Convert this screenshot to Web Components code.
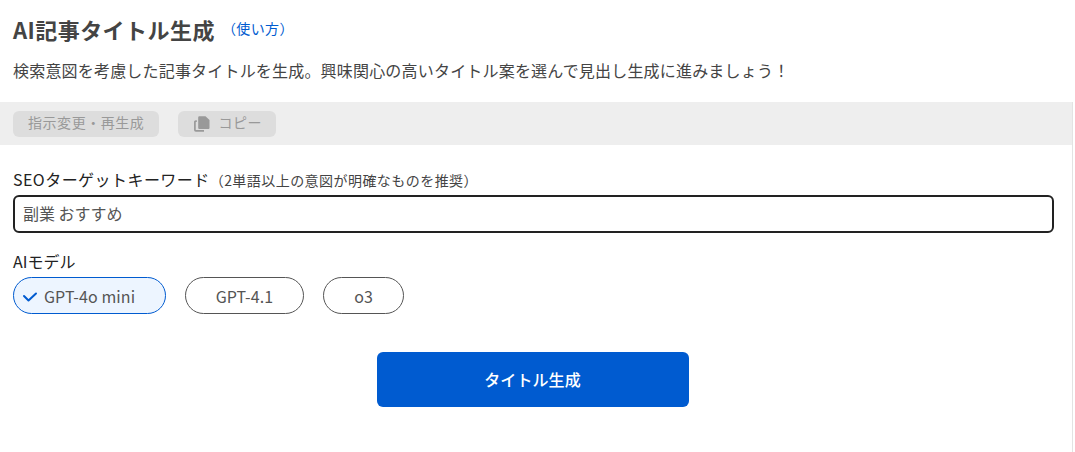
<!DOCTYPE html>
<html lang="ja">
<head>
<meta charset="utf-8">
<title>AI記事タイトル生成</title>
<style>
  html, body { margin: 0; background: #fff; }
  body { font-family: "Noto Sans CJK JP", sans-serif; color: #333; }
</style>
</head>
<body>
<title-page>
  <page-header slot="header" link="（使い方）" heading="AI記事タイトル生成">検索意図を考慮した記事タイトルを生成。興味関心の高いタイトル案を選んで見出し生成に進みましょう！</page-header>
  <action-bar slot="bar">
    <bar-button>指示変更・再生成</bar-button>
    <bar-button icon="copy">コピー</bar-button>
  </action-bar>
  <keyword-field label="SEOターゲットキーワード" hint="（2単語以上の意図が明確なものを推奨）" value="副業 おすすめ"></keyword-field>
  <model-picker label="AIモデル">
    <model-chip selected>GPT-4o mini</model-chip>
    <model-chip>GPT-4.1</model-chip>
    <model-chip>o3</model-chip>
  </model-picker>
  <submit-button>タイトル生成</submit-button>
</title-page>

<script>
class TitlePage extends HTMLElement {
  constructor() {
    super();
    this.attachShadow({mode: 'open'}).innerHTML = `
      <style>
        :host {
          display: block;
          width: 1073px;
          height: 452px;
        }
        .body {
          height: 350px;
          border-right: 1px solid #e3e3e3;
        }
        .form {
          padding: 24px 18px 0 13px;
          display: flex;
          flex-direction: column;
        }
      </style>
      <slot name="header"></slot>
      <div class="body">
        <slot name="bar"></slot>
        <div class="form"><slot></slot></div>
      </div>`;
  }
}

class PageHeader extends HTMLElement {
  connectedCallback() {
    const root = this.attachShadow({mode: 'open'});
    root.innerHTML = `
      <style>
        :host { display: block; height: 102px; padding: 0 13px; box-sizing: border-box; }
        .top { display: flex; align-items: center; height: 30px; padding-top: 14px; }
        h1 { margin: 0; font-size: 22px; line-height: 30px; font-weight: 700; color: #444; letter-spacing: 0.45px; }
        a { margin: 0 0 2px 7px; font-size: 14px; color: #005bd0; text-decoration: none; letter-spacing: 0.4px; }
        p { margin: 14px 0 0; font-size: 16px; line-height: 24px; color: #444; letter-spacing: 0.19px; }
      </style>
      <div class="top"><h1></h1><a href="#"></a></div>
      <p><slot></slot></p>`;
    root.querySelector('h1').textContent = this.getAttribute('heading');
    root.querySelector('a').textContent = this.getAttribute('link');
  }
}

class ActionBar extends HTMLElement {
  constructor() {
    super();
    this.attachShadow({mode: 'open'}).innerHTML = `
      <style>
        :host {
          display: flex;
          align-items: center;
          gap: 19px;
          height: 43px;
          padding: 0 13px;
          background: #eee;
        }
      </style>
      <slot></slot>`;
  }
}

class BarButton extends HTMLElement {
  connectedCallback() {
    const icon = this.getAttribute('icon') == 'copy' ? `
      <svg width="16" height="16" viewBox="0 0 16 16">
        <path fill="#999" d="M5.500.3H11.500L15.500 4V11.700C15.500 12.500 15 13 14.200 13H5.500C4.700 13 4.200 12.500 4.200 11.700V1.600C4.200.8 4.700.3 5.500.3z"/>
        <path fill="none" stroke="#999" stroke-width="1.700" d="M2.800 5.200H1.800C1.200 5.200.9 5.500.9 6.100V14C.9 14.600 1.200 14.900 1.800 14.900H10"/>
      </svg>` : '';
    this.attachShadow({mode: 'open'}).innerHTML = `
      <style>
        :host {
          display: inline-flex;
          align-items: center;
          gap: 8px;
          height: 26px;
          padding: 0 15px;
          border-radius: 6px;
          background: #ddd;
          color: #999;
          font-size: 14px;
          letter-spacing: 0.55px;
        }
        :host([icon]) { padding: 0 14px 0 16px; }
        svg { display: block; }
        span { margin-bottom: 3px; }
      </style>
      ${icon}<span><slot></slot></span>`;
  }
}

class KeywordField extends HTMLElement {
  connectedCallback() {
    const root = this.attachShadow({mode: 'open'});
    root.innerHTML = `
      <style>
        :host { display: block; }
        label { display: block; font-size: 16px; line-height: 20px; color: #222; letter-spacing: 0.45px; }
        small { font-size: 14px; color: #444; letter-spacing: 0.45px; }
        input {
          display: block;
          box-sizing: border-box;
          width: 100%;
          height: 38px;
          margin-top: 5px;
          padding: 0 8px 2px;
          border: 2px solid #222;
          border-radius: 6px;
          font: inherit;
          font-size: 16px;
          color: #555;
          outline: none;
        }
      </style>
      <label><span></span><small></small></label>
      <input type="text">`;
    root.querySelector('span').textContent = this.getAttribute('label');
    root.querySelector('small').textContent = this.getAttribute('hint');
    root.querySelector('input').value = this.getAttribute('value');
  }
}

class ModelPicker extends HTMLElement {
  connectedCallback() {
    const root = this.attachShadow({mode: 'open'});
    root.innerHTML = `
      <style>
        :host { display: block; margin-top: 18px; }
        .label { font-size: 16px; line-height: 20px; color: #222; }
        .chips { display: flex; gap: 19px; margin-top: 6px; }
      </style>
      <div class="label"></div>
      <div class="chips"><slot></slot></div>`;
    root.querySelector('.label').textContent = this.getAttribute('label');
  }
}

class ModelChip extends HTMLElement {
  connectedCallback() {
    const check = this.hasAttribute('selected') ? `
      <svg width="16" height="16" viewBox="0 0 16 16" fill="none" stroke="#005bd0" stroke-width="2" stroke-linecap="round" stroke-linejoin="round"><path d="M2 8l4.500 4.500 7.500-7"/></svg>` : '';
    this.attachShadow({mode: 'open'}).innerHTML = `
      <style>
        :host {
          display: inline-flex;
          align-items: center;
          justify-content: center;
          gap: 6px;
          box-sizing: border-box;
          height: 37px;
          padding: 0 29.500px;
          border: 1px solid #555;
          border-radius: 19px;
          font-size: 16px;
          color: #555;
          letter-spacing: 0.1px;
        }
        :host(:last-child) { padding: 0 30.500px; }
        :host([selected]) {
          padding: 0 30px 0 8px;
          border-color: #005bd0;
          background: #edf5ff;
        }
      </style>
      ${check}<slot></slot>`;
  }
}

class SubmitButton extends HTMLElement {
  constructor() {
    super();
    this.attachShadow({mode: 'open'}).innerHTML = `
      <style>
        :host {
          display: flex;
          align-items: center;
          justify-content: center;
          align-self: center;
          box-sizing: border-box;
          width: 312px;
          height: 55px;
          margin: 38px 2px 0 0;
          padding-bottom: 2px;
          border-radius: 6px;
          background: #005bd0;
          color: #fff;
          font-size: 16px;
          font-weight: 500;
          letter-spacing: 0.1px;
        }
      </style>
      <slot></slot>`;
  }
}

customElements.define('title-page', TitlePage);
customElements.define('page-header', PageHeader);
customElements.define('action-bar', ActionBar);
customElements.define('bar-button', BarButton);
customElements.define('keyword-field', KeywordField);
customElements.define('model-picker', ModelPicker);
customElements.define('model-chip', ModelChip);
customElements.define('submit-button', SubmitButton);
</script>
</body>
</html>
